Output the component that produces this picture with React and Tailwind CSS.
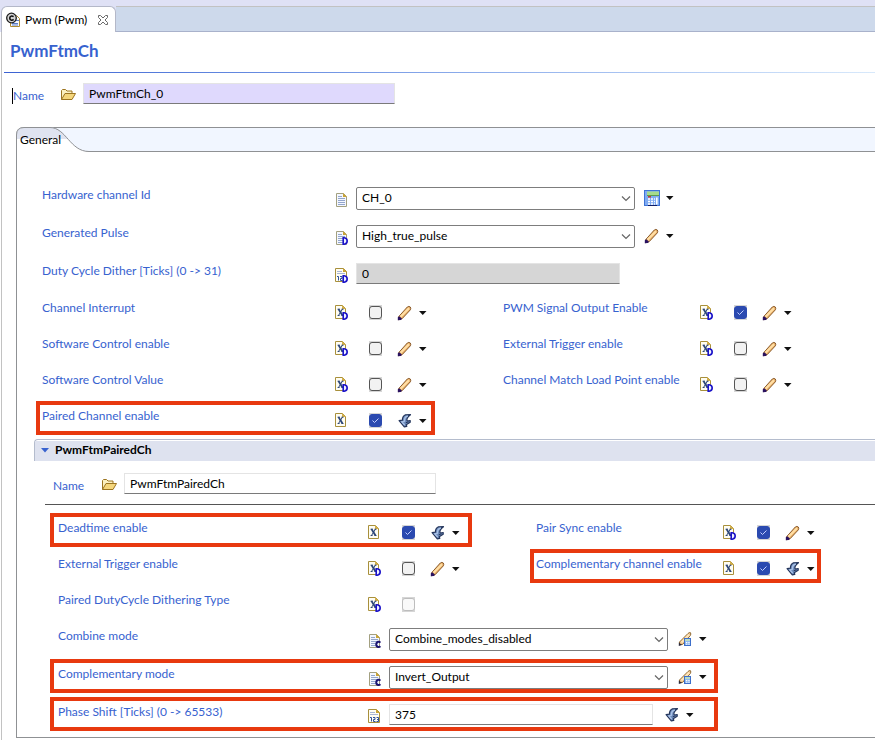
import React from "react";

/* ---------- icons ---------- */

function Badge({ letter, color }) {
  if (letter === "D")
    return <path d="M9.200 7.800h1q3 .5 3 3.200t-3 3.200h-1z" fill="#eef0ff" stroke={color} strokeWidth="1.600" />;
  if (letter === "C")
    return <path d="M13.400 9.600q-1-1-2.400-.8-1.800.5-1.800 2.600t1.800 2.600q1.400.2 2.400-.8" fill="none" stroke={color} strokeWidth="2" />;
  return null;
}

function TextDoc({ badge, color = "#1a12c8" }) {
  return (
    <svg width="16" height="16" viewBox="0 0 16 16" aria-hidden="true">
      <path d="M2.500 1.500h7l3 3v10h-10z" fill="#f4f7ff" stroke="#a3a080" />
      <path d="M9 1v4h4z" fill="#c9a437" />
      <path d="M4 4.500h4M4 6.500h7M4 8.500h7M4 10.500h7M4 12.500h7" stroke="#93a6cc" />
      <Badge letter={badge} color={color} />
    </svg>
  );
}

function XDoc({ badge }) {
  return (
    <svg width="16" height="16" viewBox="0 0 16 16" aria-hidden="true">
      <path d="M1.500.5h7l3 3v10h-10z" fill="#fffdf2" stroke="#a8903c" />
      <path d="M8 0v4h4z" fill="#d4b04a" />
      <path d="M4.500 4l4 6.500" stroke="#2c4678" strokeWidth="1.800" />
      <path d="M8.500 4l-4 6.500M3.600 4.200h2M7.500 4.200h2M3.600 10.500h2M7.500 10.500h2" stroke="#2c4678" />
      <Badge letter={badge} color="#1a12c8" />
    </svg>
  );
}

function NumberDoc({ badge }) {
  return (
    <svg width="16" height="16" viewBox="0 0 16 16" aria-hidden="true">
      <path d="M1.500.5h8l3 3v10h-11z" fill="#fffdf2" stroke="#a8903c" />
      <path d="M9 0v4h4z" fill="#c9a437" />
      <path d="M3 3.500h5M3 5.500h8" stroke="#a9b6d4" />
      <path d="M3 8.500h1.500v4M6 8.500h2v2H6.500v2H8.500M9.500 8.500h2v4h-2M10 10.500h1.500" fill="none" stroke="#2c4f9a" />
      <Badge letter={badge} color="#1a12c8" />
    </svg>
  );
}

function Pencil() {
  return (
    <svg width="16" height="16" viewBox="0 0 16 16" aria-hidden="true">
      <path d="M1.800 11.500L10.300 2q1.600-1.200 3 0 .9 1.200 0 2.900L5 13.800 1.500 14.800z" fill="#eeb56c" stroke="#8a5a2a" />
      <path d="M3.500 11.800L12 3.200" stroke="#ffdfa6" strokeWidth="2" />
      <path d="M.8 15.200v-3l1.600-1L5 13.800 3.800 15z" fill="#2a1260" />
    </svg>
  );
}

function PencilCalc() {
  return (
    <svg width="16" height="16" viewBox="0 0 16 16" aria-hidden="true">
      <path d="M2.500 13.500V11L11 2.500q1.500-1.500 2.500-.8.800 1.300-.3 3L5.500 13.500z" fill="#eec38a" stroke="#8f6a34" />
      <path d="M4.500 11.500L12.300 3.500" stroke="#ffe4b8" strokeWidth="2" />
      <path d="M1.800 15v-3.500L5 14z" fill="#2a2a3c" />
      <rect x="7.500" y="7.500" width="6" height="7" fill="#8fb8f0" stroke="#3d6fca" />
      <path d="M8 9h5" stroke="#c9e8b4" strokeWidth="1.400" />
      <path d="M9 11.500h4M9 13.200h4" stroke="#fff" strokeDasharray="1 .7" />
    </svg>
  );
}

function Calculator() {
  return (
    <svg width="16" height="16" viewBox="0 0 16 16" aria-hidden="true">
      <rect width="16" height="16" fill="#3f74d6" />
      <rect x="1" y="1" width="14" height="14" fill="#7fabf2" />
      <rect x="3" y="1.500" width="12" height="4" fill="#a6dc8c" />
      <path d="M3 5.500h12" stroke="#5c9c50" />
      <path d="M4 6.800h3" stroke="#c83c30" strokeWidth="1.500" />
      <path d="M4 9h7M4 11.500h7M4 14h7" stroke="#fff" strokeWidth="1.500" strokeDasharray="2 1" />
      <path d="M12.800 7.500v7" stroke="#fff" strokeWidth="1.600" />
      <path d="M4 15.500h9" stroke="#0d1c66" />
    </svg>
  );
}

function Derived() {
  return (
    <svg width="16" height="16" viewBox="0 0 16 16" aria-hidden="true">
      <path d="M13.500 1.700L8.500 1.800Q5.300 3.300 5.400 7.200L2.100 7.700 7.300 13.800 9.800 13.300 9.200 11.800 13.200 9.300V7.500L10.200 8Q8.800 5.200 13.500 1.700z" fill="#6f8dbd" stroke="#25365c" strokeWidth="1.200" strokeLinejoin="round" />
      <path d="M10.800 3Q7.200 4 7.400 8.300L4.800 8.900 7.700 12" fill="none" stroke="#a9c1e6" strokeWidth="1.300" />
      <path d="M8.700 9.800l3-1" stroke="#25365c" />
    </svg>
  );
}

function Folder() {
  return (
    <svg width="16" height="16" viewBox="0 0 16 16" aria-hidden="true">
      <path d="M1.500 12.500V3.500l1-1h3l1.500 1.500h5v3" fill="#fbf0c0" stroke="#9c7420" />
      <path d="M1.500 12.500L5 6.500h10.500L12 12.500z" fill="#f4d67c" stroke="#9c7420" strokeLinejoin="round" />
    </svg>
  );
}

function ModuleIcon() {
  return (
    <svg width="16" height="16" viewBox="0 0 16 16" aria-hidden="true">
      <path d="M4.500 3.500h6l3 3v8h-9z" fill="#f6f8ff" stroke="#b08c30" />
      <path d="M6 11.500h6M6 13h6M10 8.500h3" stroke="#5a7cc4" />
      <circle cx="5.500" cy="6" r="4.800" fill="#d4d4d4" stroke="#1c1c1c" strokeWidth="1.300" />
      <path d="M7.600 4.600Q5.500 3 4 5q-.8 2.200 1 3 1.500.5 2.600-.6" fill="none" stroke="#111" strokeWidth="1.500" />
    </svg>
  );
}

function CloseIcon() {
  return (
    <svg width="12" height="12" viewBox="0 0 12 12" aria-hidden="true">
      <path d="M1.500 1.500h2L6 4l2.500-2.500h2v2L8 6l2.500 2.500v2h-2L6 8l-2.500 2.500h-2v-2L4 6 1.500 3.500z" fill="#fff" stroke="#6a6a6a" />
    </svg>
  );
}

function Chevron() {
  return (
    <svg className="pointer-events-none absolute top-2 right-1" width="10" height="8" viewBox="0 0 10 8" aria-hidden="true">
      <path d="M1 1.500l4 4 4-4" fill="none" stroke="#666" strokeWidth="1.200" />
    </svg>
  );
}

/* ---------- controls ---------- */

const docs = {
  text: <TextDoc />,
  textD: <TextDoc badge="D" />,
  textC: <TextDoc badge="C" color="#1c1470" />,
  num: <NumberDoc />,
  numD: <NumberDoc badge="D" />,
  x: <XDoc />,
  xD: <XDoc badge="D" />,
};

const actions = {
  pencil: <Pencil />,
  derived: <Derived />,
  calc: <Calculator />,
  pencilCalc: <PencilCalc />,
};

function Actions({ kind, name }) {
  return (
    <div className="flex items-start gap-1.5">
      <button type="button" aria-label={`Edit ${name}`}>{actions[kind]}</button>
      <button type="button" aria-label={`More options for ${name}`} className="pt-1.5">
        <svg className="block" width="8" height="4" viewBox="0 0 8 4" aria-hidden="true">
          <path d="M0 0h7.500L3.750 4z" fill="#111" />
        </svg>
      </button>
    </div>
  );
}

function Label({ id, text, className }) {
  return (
    <label htmlFor={id} className={`${className} shrink-0 whitespace-nowrap text-[#3762cf]`}>{text}</label>
  );
}

function Highlight({ className }) {
  return (
    <span aria-hidden="true" className={`${className} pointer-events-none absolute -top-[7px] h-[34px] border-4 border-[#e8390f]`} />
  );
}

function CheckCell({ id, text, labelWidth, doc, checked, disabled, action, mark, width = "" }) {
  return (
    <div className={`${width} relative flex shrink-0 items-start`}>
      {mark && <Highlight className={mark} />}
      <Label id={id} text={text} className={labelWidth} />
      <span className="mt-[5px] w-4 shrink-0">{docs[doc]}</span>
      <span className="relative mt-[5px] ml-[19px] block w-[13px] shrink-0 bg-[#d6d6d6] py-px">
        <input
          id={id}
          type="checkbox"
          defaultChecked={checked}
          disabled={disabled}
          className="peer block size-[13px] appearance-none rounded-[3px] border border-[#555] bg-[#f2f2f2] checked:border-[#2b4ab0] checked:bg-[#2b4ab0] disabled:border-[#bdbdbd] disabled:bg-[#f9f9f9]"
        />
        <svg className="pointer-events-none absolute top-px left-0 hidden peer-checked:block" width="13" height="13" viewBox="0 0 13 13" aria-hidden="true">
          <path d="M3.500 6.500l2 2 4-4" fill="none" stroke="#c4d0ff" />
        </svg>
      </span>
      {action && (
        <div className="mt-[5px] ml-[15px]">
          <Actions kind={action} name={text} />
        </div>
      )}
    </div>
  );
}

function FieldRow({ id, text, labelWidth, doc, mark, height, children, action, gap = "ml-[9px]" }) {
  return (
    <div className={`${height} relative flex items-start`}>
      {mark && <Highlight className={mark} />}
      <Label id={id} text={text} className={labelWidth} />
      <span className="mt-[5px] mr-1.5 w-4 shrink-0">{docs[doc]}</span>
      {children}
      {action && (
        <div className={`${gap} mt-[3px]`}>
          <Actions kind={action} name={text} />
        </div>
      )}
    </div>
  );
}

function Select({ id, value }) {
  return (
    <span className="relative block w-[279px]">
      <select id={id} defaultValue={value} className="block h-[23px] w-full appearance-none rounded-[2px] border border-[#7d7d7d] bg-white pb-px pl-[5px] text-black">
        <option>{value}</option>
      </select>
      <Chevron />
    </span>
  );
}

const inputBase =
  "block h-[21px] border border-[#e4e4e4] border-b-[#7a7a7a] px-[5px] pb-px text-black";

/* ---------- page ---------- */

export default function App() {
  return (
    <div className="bg-white font-['Lato','Open_Sans',sans-serif] text-[12px] leading-4 text-black">
      <div className="h-1.5 bg-[#dfe1f5]" />
      <div className="flex h-[26px] bg-[#dfe1f5] pl-px">
        <div className="flex items-center rounded-t-md border border-b-0 border-[#b4b8c8] bg-white pr-1.5 pl-1">
          <ModuleIcon />
          <span className="ml-[3px] whitespace-nowrap">Pwm (Pwm)</span>
          <button type="button" aria-label="Close tab" className="ml-2.5"><CloseIcon /></button>
        </div>
        <div className="flex-1 border-y border-t-[#c2c2c2] border-b-[#a9b2cb] bg-[#cdd9eb]" />
      </div>

      <main className="ml-px border-l border-[#c2c2c2] pb-0.5">
        <h1 className="ml-0.5 pt-[7px] pb-[9px] pl-1.5 text-[17px] leading-6 font-bold text-[#3762cf]">PwmFtmCh</h1>
        <div className="ml-0.5 h-px bg-linear-to-r from-[#3c62d2] to-[#d8e9fb]" />

        <div className="flex items-start pt-[10px] pl-2.5">
          <label htmlFor="name" className="mt-[5px] w-12 border-l border-black text-[#3762cf]">Name</label>
          <span className="mt-1 mr-[7px]"><Folder /></span>
          <input id="name" defaultValue="PwmFtmCh_0" className={`${inputBase} w-[312px] bg-[#dfd9fd]`} />
        </div>

        <section className="mt-[23px] ml-3.5">
          <div className="relative h-[25px] rounded-tl-lg border-y border-l border-[#8f9194] bg-[#f1f6ff]">
            <svg className="absolute -top-px -left-px" width="76" height="25" viewBox="0 0 76 25" aria-hidden="true">
              <path d="M.5 25V8Q.5.5 8 .5H34C50 .5 54 24.500 73 24.500H76V25z" fill="#fff" />
              <path d="M.5 12V8Q.5.5 8 .5H34C44 .5 48 8 52 12z" fill="#dfe3f0" />
              <path d="M.5 25V8Q.5.5 8 .5H34C50 .5 54 24.500 73 24.500H76" fill="none" stroke="#8f9194" />
            </svg>
            <h2 className="relative pt-1 pl-[3px]">General</h2>
          </div>

          <div className="border-b border-l border-[#8f9194] pt-[35px]">
            <div className="pl-[25px]">
              <FieldRow id="hw" text="Hardware channel Id" labelWidth="w-[292px]" height="h-[38px]" doc="text" action="calc">
                <Select id="hw" value="CH_0" />
              </FieldRow>
              <FieldRow id="pulse" text="Generated Pulse" labelWidth="w-[292px]" height="h-[38px]" doc="textD" action="pencil">
                <Select id="pulse" value="High_true_pulse" />
              </FieldRow>
              <FieldRow id="dither" text="Duty Cycle Dither [Ticks] (0 -> 31)" labelWidth="w-[292px]" height="h-[37px]" doc="numD">
                <input id="dither" readOnly defaultValue="0" className={`${inputBase} w-[264px] bg-[#d6d6d6]`} />
              </FieldRow>
              <div className="flex h-9">
                <CheckCell id="int" text="Channel Interrupt" width="w-[461px]" labelWidth="w-[292px]" doc="xD" action="pencil" />
                <CheckCell id="out" text="PWM Signal Output Enable" labelWidth="w-[196px]" doc="xD" checked action="pencil" />
              </div>
              <div className="flex h-9">
                <CheckCell id="swc" text="Software Control enable" width="w-[461px]" labelWidth="w-[292px]" doc="xD" action="pencil" />
                <CheckCell id="ext" text="External Trigger enable" labelWidth="w-[196px]" doc="xD" action="pencil" />
              </div>
              <div className="flex h-9">
                <CheckCell id="swv" text="Software Control Value" width="w-[461px]" labelWidth="w-[292px]" doc="xD" action="pencil" />
                <CheckCell id="match" text="Channel Match Load Point enable" labelWidth="w-[196px]" doc="xD" action="pencil" />
              </div>
              <div className="flex h-[31px]">
                <CheckCell id="paired" text="Paired Channel enable" width="w-[461px]" labelWidth="w-[292px]" doc="x" checked action="derived" mark="-left-1.5 w-[399px]" />
              </div>
            </div>

            <div className="ml-[17px]">
              <div className="rounded-tl border-t border-l border-[#b4bccd] pt-px">
                <div className="flex h-5 items-center bg-[#dee2ef] pb-0.5 pl-1.5">
                  <svg width="8" height="5" viewBox="0 0 8 5" aria-hidden="true">
                    <path d="M0 0h8L4 4.500z" fill="#3762cf" />
                  </svg>
                  <h3 className="ml-1.5 font-bold">PwmFtmPairedCh</h3>
                </div>
              </div>

              <div className="flex items-start pt-[12px] pl-[19px]">
                <label htmlFor="pname" className="mt-[5px] w-12 text-[#3762cf]">Name</label>
                <span className="mt-1 mr-[7px]"><Folder /></span>
                <input id="pname" defaultValue="PwmFtmPairedCh" className={`${inputBase} w-[312px] bg-white`} />
              </div>
              <hr className="mt-[10px] ml-[11px] border-[#555]" />

              <div className="pt-[15px] pl-6">
                <div className="flex h-9">
                  <CheckCell id="dead" text="Deadtime enable" width="w-[478px]" labelWidth="w-[309px]" doc="x" checked action="derived" mark="-left-2 w-[422px]" />
                  <CheckCell id="sync" text="Pair Sync enable" labelWidth="w-[186px]" doc="xD" checked action="pencil" />
                </div>
                <div className="flex h-9">
                  <CheckCell id="ext2" text="External Trigger enable" width="w-[478px]" labelWidth="w-[309px]" doc="xD" action="pencil" />
                  <CheckCell id="comp" text="Complementary channel enable" labelWidth="w-[186px]" doc="x" checked action="derived" mark="-left-1.5 w-[291px]" />
                </div>
                <div className="flex h-9">
                  <CheckCell id="dth" text="Paired DutyCycle Dithering Type" width="w-[478px]" labelWidth="w-[309px]" doc="xD" disabled />
                </div>
                <FieldRow id="combine" text="Combine mode" labelWidth="w-[309px]" height="h-[38px]" doc="textC" action="pencilCalc">
                  <Select id="combine" value="Combine_modes_disabled" />
                </FieldRow>
                <FieldRow id="cmode" text="Complementary mode" labelWidth="w-[309px]" height="h-[38px]" doc="textC" action="pencilCalc" mark="-left-2 w-[668px]">
                  <Select id="cmode" value="Invert_Output" />
                </FieldRow>
                <FieldRow id="phase" text="Phase Shift [Ticks] (0 -> 65533)" labelWidth="w-[309px]" height="h-[33px]" doc="num" action="derived" gap="ml-[11px]" mark="-left-2 w-[668px]">
                  <input id="phase" defaultValue="375" className={`${inputBase} w-[264px] bg-white`} />
                </FieldRow>
              </div>
            </div>
          </div>
        </section>
      </main>
    </div>
  );
}
